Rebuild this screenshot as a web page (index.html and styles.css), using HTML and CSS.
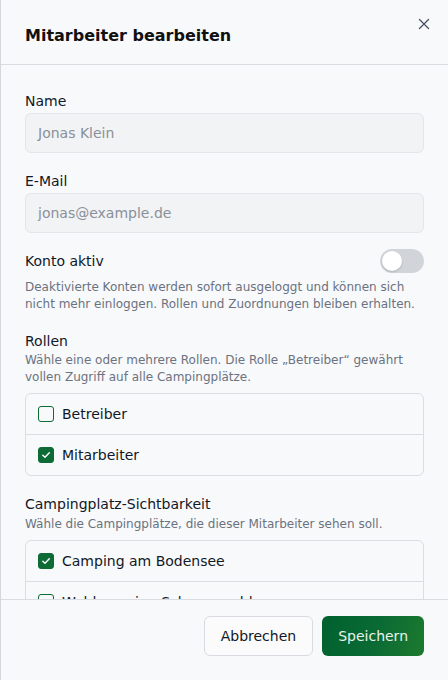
FILE: index.html
```html
<!DOCTYPE html>
<html lang="de">
<head>
<meta charset="utf-8">
<title>Mitarbeiter bearbeiten</title>
<link rel="stylesheet" href="styles.css">
</head>
<body>
<div class="sheet">
  <header class="sheet-header">
    <h2 class="sheet-title">Mitarbeiter bearbeiten</h2>
    <button class="close-btn" aria-label="Schließen">
      <svg width="12" height="12" viewBox="0 0 12 12"><path d="M1.5 1.5 L10.5 10.5 M10.5 1.5 L1.5 10.5" stroke="#4b5563" stroke-width="1.4" stroke-linecap="round" fill="none"/></svg>
    </button>
  </header>

  <div class="sheet-body">
    <div class="field">
      <label class="field-label">Name</label>
      <div class="input">Jonas Klein</div>
    </div>
    <div class="field field-gap">
      <label class="field-label">E-Mail</label>
      <div class="input">jonas@example.de</div>
    </div>

    <div class="toggle-row">
      <span class="field-label">Konto aktiv</span>
      <span class="switch"><span class="knob"></span></span>
    </div>
    <p class="hint hint-toggle">Deaktivierte Konten werden sofort ausgeloggt und können sich nicht mehr einloggen. Rollen und Zuordnungen bleiben erhalten.</p>

    <section class="group">
      <div class="field-label">Rollen</div>
      <p class="hint hint-group">Wähle eine oder mehrere Rollen. Die Rolle „Betreiber“ gewährt vollen Zugriff auf alle Campingplätze.</p>
      <div class="list">
        <div class="list-row"><span class="check"></span><span class="row-text">Betreiber</span></div>
        <div class="list-row"><span class="check checked"><svg width="10" height="10" viewBox="0 0 10 10"><path d="M1.8 5.2 L4 7.3 L8.3 2.8" stroke="#fff" stroke-width="1.4" fill="none" stroke-linecap="round" stroke-linejoin="round"/></svg></span><span class="row-text">Mitarbeiter</span></div>
      </div>
    </section>

    <section class="group">
      <div class="field-label">Campingplatz-Sichtbarkeit</div>
      <p class="hint hint-group2">Wähle die Campingplätze, die dieser Mitarbeiter sehen soll.</p>
      <div class="list list2">
        <div class="list-row"><span class="check checked"><svg width="10" height="10" viewBox="0 0 10 10"><path d="M1.8 5.2 L4 7.3 L8.3 2.8" stroke="#fff" stroke-width="1.4" fill="none" stroke-linecap="round" stroke-linejoin="round"/></svg></span><span class="row-text">Camping am Bodensee</span></div>
        <div class="list-row"><span class="check"></span><span class="row-text">Waldcamping Schwarzwald</span></div>
      </div>
    </section>
  </div>

  <footer class="sheet-footer">
    <button class="btn btn-secondary">Abbrechen</button>
    <button class="btn btn-primary">Speichern</button>
  </footer>
</div>
</body>
</html>
```

FILE: styles.css
```css
* { box-sizing: border-box; }
html, body { margin: 0; padding: 0; }
body {
  font-family: "DejaVu Sans", "Noto Sans", sans-serif;
  color: #111827;
  background: #f8f9fb;
}
.sheet {
  position: relative;
  height: 680px;
  display: flex;
  flex-direction: column;
  background: #f8f9fb;
  border-left: 1px solid #d3d7dc;
}
.sheet-header {
  padding: 24px 24px 16px 24px;
  border-bottom: 1px solid #d9dde2;
}
.sheet-title {
  margin: 0;
  font-size: 16px;
  line-height: 24px;
  font-weight: 700;
  color: #111111;
}
.close-btn {
  position: absolute;
  top: 16px;
  right: 16px;
  width: 16px;
  height: 16px;
  padding: 0;
  border: 0;
  background: transparent;
  display: flex;
  align-items: center;
  justify-content: center;
}
.sheet-body {
  flex: 1;
  overflow: hidden;
  padding: 26px 24px 0 24px;
}
.field-label {
  display: block;
  font-size: 14px;
  line-height: 20px;
  color: #111827;
}
.field .field-label { margin-bottom: 2px; }
.field-gap { margin-top: 18px; }
.input {
  height: 40px;
  border: 1px solid #e3e6ea;
  border-radius: 6px;
  background: #f1f3f5;
  padding: 0 12px;
  display: flex;
  align-items: center;
  font-size: 14px;
  color: #8a9099;
}
.toggle-row {
  margin-top: 16px;
  height: 24px;
  display: flex;
  align-items: center;
  justify-content: space-between;
}
.switch {
  width: 44px;
  height: 24px;
  border-radius: 12px;
  background: #d1d5da;
  display: flex;
  align-items: center;
  padding: 2px;
}
.knob {
  width: 20px;
  height: 20px;
  border-radius: 50%;
  background: #ffffff;
  box-shadow: 0 1px 2px rgba(0,0,0,0.18);
}
.hint {
  margin: 0;
  font-size: 12px;
  line-height: 17px;
  color: #6b7280;
}
.hint-toggle { margin-top: 6px; }
.group { margin-top: 18px; }
.hint-group { margin-top: 1px; }
.hint-group2 { margin-top: 2px; }
.list {
  margin-top: 7px;
  border: 1px solid #dadde2;
  border-radius: 6px;
}
.list-row {
  height: 40px;
  display: flex;
  align-items: center;
  gap: 8px;
  padding: 0 12px;
}
.list-row + .list-row { border-top: 1px solid #dadde2; height: 41px; }
.check {
  width: 16px;
  height: 16px;
  border-radius: 3px;
  border: 1.5px solid #0d6b36;
  display: flex;
  align-items: center;
  justify-content: center;
  flex: none;
}
.check.checked { background: #0d6b36; }
.row-text {
  font-size: 14px;
  color: #111827;
}
.sheet-footer {
  border-top: 1px solid #d9dde2;
  padding: 16px 24px 24px 24px;
  display: flex;
  justify-content: flex-end;
  gap: 9px;
  background: #f8f9fb;
}
.btn {
  height: 40px;
  padding: 0 16px;
  border-radius: 6px;
  font-family: "DejaVu Sans", "Noto Sans", sans-serif;
  font-size: 14px;
}
.btn-secondary {
  background: #fbfbfc;
  border: 1px solid #d8dce1;
  color: #111827;
}
.btn-primary {
  border: 0;
  color: #e9f3ec;
  background: linear-gradient(110deg, #00612f 0%, #0b6b34 55%, #1e7a2e 100%);
}
```
